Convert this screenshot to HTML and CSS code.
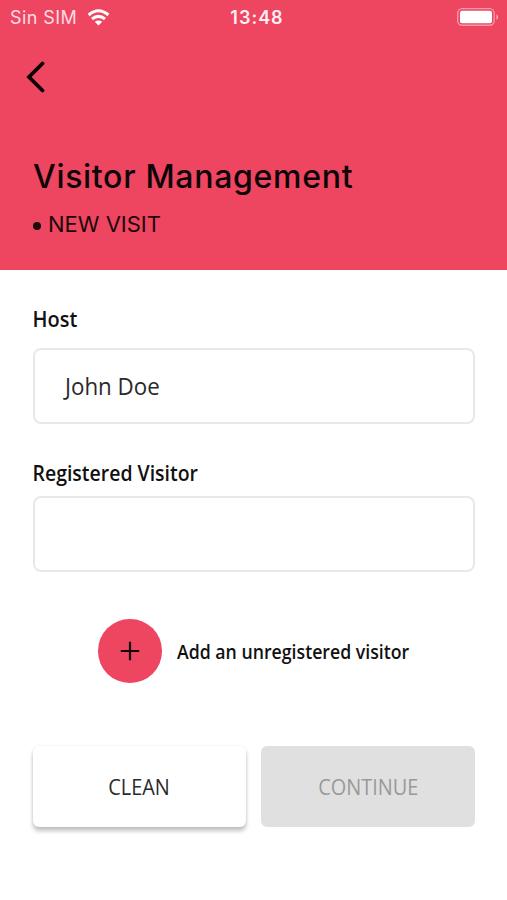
FILE: index.html
```html
<!DOCTYPE html>
<html lang="en">
<head>
<meta charset="utf-8">
<title>Visitor Management</title>
<link rel="stylesheet" href="styles.css">
</head>
<body>
<header class="header">
  <div class="status">
    <div class="carrier"><span class="t-sim">Sin SIM</span>
      <svg class="wifi" width="24" height="17" viewBox="0 0 24 17"><path d="M11.5 16.5 7.8 12.8Q11.5 10 15.2 12.8Z" fill="#fff"/><path d="M5 10Q11.5 4.8 18 10M1.6 6Q11.5-2.4 21.4 6" fill="none" stroke="#fff" stroke-width="3"/></svg>
    </div>
    <span class="t-clock">13:48</span>
    <svg class="battery" width="43" height="20" viewBox="0 0 43 20"><rect x="1.7" y="1.6" width="36.5" height="16.6" rx="4.5" fill="none" stroke="#fff" stroke-opacity=".45" stroke-width="1.4"/><rect x="4" y="3.8" width="32" height="12.4" rx="2" fill="#fff"/><path d="M40.5 7q3.4 3 0 6z" fill="#fff" fill-opacity=".6"/></svg>
  </div>
  <button class="back" aria-label="Back"><svg width="22" height="32" viewBox="0 0 22 32"><path d="M17.5 2.5 4 16 17.5 29.5" fill="none" stroke="#090304" stroke-width="3.8" stroke-linecap="round"/></svg></button>
  <h1><span class="t-title">Visitor Management</span></h1>
  <p class="sub"><span class="dot"></span><span class="t-sub">NEW VISIT</span></p>
</header>
<main class="form">
  <div class="label"><span class="narrow t-host">Host</span></div>
  <div class="field"><span class="narrow t-john">John Doe</span></div>
  <div class="label second"><span class="narrow t-reg">Registered Visitor</span></div>
  <div class="field"></div>
  <div class="add">
    <button class="plus" aria-label="Add"><svg width="20" height="20" viewBox="0 0 20 20"><path d="M10 .8v18.4M.8 10h18.4" stroke="#14060a" stroke-width="2.2"/></svg></button>
    <span class="narrow t-add">Add an unregistered visitor</span>
  </div>
  <div class="actions">
    <button class="btn clean"><span class="narrow t-clean">CLEAN</span></button>
    <button class="btn continue"><span class="narrow t-cont">CONTINUE</span></button>
  </div>
</main>
</body>
</html>
```
FILE: styles.css
```css
* { box-sizing: border-box; }
body { margin: 0; min-height: 900px; background: #fff; color: #111; font-family: "Open Sans", sans-serif; }
button { border: 0; padding: 0; background: none; font: inherit; }
span { white-space: nowrap; }
svg { display: block; }
.header { height: 270px; background: #ee4561; font-family: Inter, sans-serif; overflow: hidden; }
.status { display: grid; grid-template-columns: 1fr auto 1fr; align-items: center; height: 34px; padding: 0 8px 0 10px; color: #ffdce2; font-size: 18px; }
.carrier { display: flex; align-items: center; gap: 10px; }
.t-sim { letter-spacing: .4px; }
.t-clock { margin-left: 5px; font-weight: 600; letter-spacing: 1px; color: #fff0f3; }
.battery { justify-self: end; }
.back { display: block; margin: 27px 0 0 25px; }
h1 { margin: 64px 0 0 33px; font-size: 32px; line-height: 40px; font-weight: 550; color: #0d0507; letter-spacing: .7px; }
.sub { display: flex; align-items: center; gap: 7px; margin: 13px 0 0 33px; font-size: 22px; line-height: 28px; color: #1d080c; }
.dot { width: 8px; height: 8px; border-radius: 50%; background: #1d080c; margin-top: 4px; }
.form { padding: 33px 32px 60px 32.5px; }
.narrow { display: inline-block; transform-origin: left center; }
.t-host { transform: translateX(-.5px) scaleX(.95); }
.t-john { transform: translateX(-1px) scaleX(.93); }
.t-reg { transform: translateX(-.5px) scaleX(.927); }
.t-add { transform: translateY(.5px) scaleX(.885); }
.t-clean, .t-cont { transform: scaleX(.905); transform-origin: center; }
.label { display: block; height: 32px; line-height: 32px; margin-bottom: 12.5px; font-size: 21px; font-weight: 600; }
.second { margin: 33.5px 0 7px; }
.field { height: 76px; border: 2px solid #e8e8e8; border-radius: 8px; padding: 0 31px; line-height: 71px; font-size: 24px; color: #2a2a2a; }
.add { display: flex; align-items: center; gap: 15px; margin: 47px 0 63px 65.5px; font-size: 20px; font-weight: 600; }
.plus { display: grid; place-items: center; width: 63.5px; height: 63.5px; border-radius: 50%; background: #ee4561; }
.actions { display: grid; grid-template-columns: 1fr 1fr; gap: 15px; }
.btn { height: 81px; border-radius: 6px; font-size: 22px; }
.clean { background: #fff; color: #2a2a2a; box-shadow: 0 4px 4px rgba(0,0,0,.24), 0 0 3px rgba(0,0,0,.08); }
.continue { background: #e0e0e0; color: #999; }
```
